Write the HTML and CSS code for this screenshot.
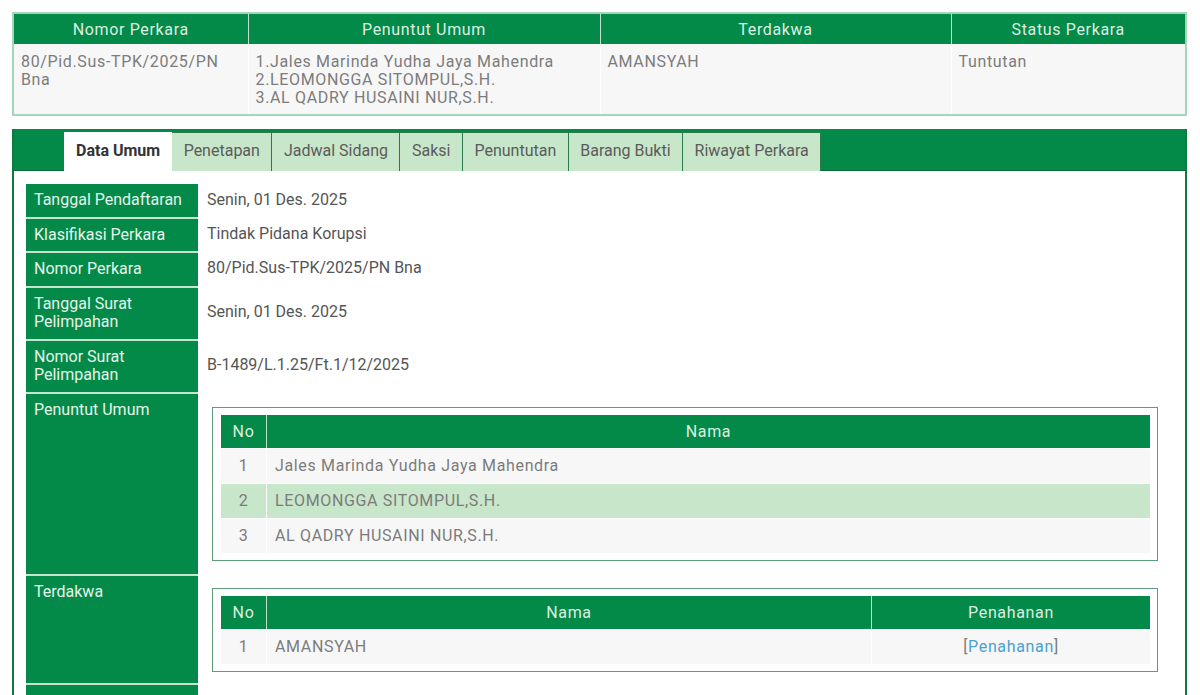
FILE: index.html
```html
<!DOCTYPE html>
<html lang="id">
<head>
<meta charset="utf-8">
<title>Detil Perkara</title>
<link rel="stylesheet" href="styles.css">
</head>
<body>
<div class="page">
  <table class="summary">
    <colgroup><col class="c1"><col class="c2"><col class="c3"><col class="c4"></colgroup>
    <thead>
      <tr><th>Nomor Perkara</th><th>Penuntut Umum</th><th>Terdakwa</th><th>Status Perkara</th></tr>
    </thead>
    <tbody>
      <tr>
        <td>80/Pid.Sus-TPK/2025/PN Bna</td>
        <td>1.Jales Marinda Yudha Jaya Mahendra<br>2.LEOMONGGA SITOMPUL,S.H.<br>3.AL QADRY HUSAINI NUR,S.H.</td>
        <td>AMANSYAH</td>
        <td>Tuntutan</td>
      </tr>
    </tbody>
  </table>

  <div class="panel">
    <ul class="tabs">
      <li class="tab active">Data Umum</li>
      <li class="tab">Penetapan</li>
      <li class="tab">Jadwal Sidang</li>
      <li class="tab">Saksi</li>
      <li class="tab">Penuntutan</li>
      <li class="tab">Barang Bukti</li>
      <li class="tab">Riwayat Perkara</li>
    </ul>
    <div class="content">
      <div class="row">
        <div class="label">Tanggal Pendaftaran</div>
        <div class="value">Senin, 01 Des. 2025</div>
      </div>
      <div class="row">
        <div class="label">Klasifikasi Perkara</div>
        <div class="value">Tindak Pidana Korupsi</div>
      </div>
      <div class="row">
        <div class="label">Nomor Perkara</div>
        <div class="value">80/Pid.Sus-TPK/2025/PN Bna</div>
      </div>
      <div class="row">
        <div class="label">Tanggal Surat<br>Pelimpahan</div>
        <div class="value">Senin, 01 Des. 2025</div>
      </div>
      <div class="row">
        <div class="label">Nomor Surat<br>Pelimpahan</div>
        <div class="value">B-1489/L.1.25/Ft.1/12/2025</div>
      </div>
      <div class="row">
        <div class="label">Penuntut Umum</div>
        <div class="value boxed">
          <div class="box">
            <table class="inner">
              <thead><tr><th class="no">No</th><th>Nama</th></tr></thead>
              <tbody>
                <tr><td class="no">1</td><td>Jales Marinda Yudha Jaya Mahendra</td></tr>
                <tr class="hl"><td class="no">2</td><td>LEOMONGGA SITOMPUL,S.H.</td></tr>
                <tr><td class="no">3</td><td>AL QADRY HUSAINI NUR,S.H.</td></tr>
              </tbody>
            </table>
          </div>
        </div>
      </div>
      <div class="row">
        <div class="label">Terdakwa</div>
        <div class="value boxed">
          <div class="box box-b">
            <table class="inner">
              <thead><tr><th class="no">No</th><th class="nama">Nama</th><th>Penahanan</th></tr></thead>
              <tbody>
                <tr><td class="no">1</td><td>AMANSYAH</td><td class="center">[<a href="#" class="link">Penahanan</a>]</td></tr>
              </tbody>
            </table>
          </div>
        </div>
      </div>
      <div class="row">
        <div class="label label-empty"></div>
        <div class="value"></div>
      </div>
    </div>
  </div>
</div>
</body>
</html>
```

FILE: styles.css
```css
* { box-sizing: border-box; }

body {
  margin: 0;
  background: #ffffff;
  font-family: Roboto, "Liberation Sans", sans-serif;
  font-size: 16px;
  color: #555555;
}

.page {
  padding: 12px 13px 0 12px;
}

/* summary table */
.summary {
  width: 100%;
  border-collapse: collapse;
  table-layout: fixed;
  border: 2px solid #a6d4b7;
  letter-spacing: 0.65px;
}
.summary .c1 { width: 235px; }
.summary .c2 { width: 352px; }
.summary .c3 { width: 351px; }
.summary th {
  background: #038a48;
  color: #dcefe2;
  font-weight: 400;
  height: 31px;
  padding: 0 8px;
  text-align: center;
  border-left: 1px solid #bfe2cb;
}
.summary th:first-child,
.summary td:first-child { border-left: 0; }
.summary td {
  background: #f7f7f7;
  color: #7c7c7c;
  vertical-align: top;
  padding: 9px 7px 7px;
  line-height: 18px;
  height: 69px;
  border-left: 1px solid #ffffff;
}

/* panel */
.panel {
  margin-top: 13px;
  border: 2px solid #0d7a3f;
  border-top: 0;
}
.tabs {
  list-style: none;
  margin: 0;
  display: flex;
  background: #038a48;
  padding: 3px 0 0 50px;
  border-bottom: 1px solid #0b6a36;
}
.tab {
  height: 39px;
  padding: 0 11.5px 3px;
  display: flex;
  align-items: center;
  background: #c8e6c9;
  color: #5b5b5b;
  border: 1px solid #2a7d4b;
  border-left: 0;
  border-bottom: 0;
  margin-bottom: -1px;
}
.tab.active {
  background: #ffffff;
  color: #333333;
  font-weight: 700;
  border: 0;
  padding: 0 12px 3px;
}

.content {
  padding: 13px 14px 0 12px;
  background: #ffffff;
}
.row {
  display: flex;
  gap: 2px;
}
.label {
  flex: 0 0 172px;
  background: #038a48;
  color: #e6f4ea;
  padding: 7px 8px;
  line-height: 18.5px;
  border-top: 2px solid #c6e5d0;
}
.label-empty { min-height: 34px; }
.row:first-child .label { border-top: 0; }
.value {
  flex: 1;
  display: flex;
  align-items: center;
  padding: 0 7px;
  color: #555555;
  line-height: 18.5px;
}
.value.boxed {
  align-items: flex-start;
}

.box {
  flex: 1;
  margin: 15px 6px 13px 5px;
  border: 1px solid #5f9c7c;
  padding: 7px 7px 7px 8px;
}
.box-b {
  margin-top: 14px;
  margin-bottom: 11px;
}

.inner {
  width: 100%;
  border-collapse: separate;
  border-spacing: 0;
  letter-spacing: 0.65px;
}
.inner th {
  background: #038a48;
  color: #dcefe2;
  font-weight: 400;
  line-height: 19px;
  padding: 7px 8px;
  text-align: center;
  border-left: 1px solid #bfe2cb;
}
.inner th:first-child,
.inner td:first-child { border-left: 0; }
.inner td {
  background: #f7f7f7;
  color: #7c7c7c;
  line-height: 19px;
  padding: 7.5px 8px;
  border-left: 1px solid #ffffff;
  border-top: 1px solid #ffffff;
}
.inner .no {
  width: 45px;
  text-align: center;
  padding-left: 0;
  padding-right: 0;
}
.inner .nama { width: 605px; }
.inner tr.hl td { background: #c8e6c9; }
.inner .center { text-align: center; }

.link {
  color: #4aa1cf;
  text-decoration: none;
}
```
